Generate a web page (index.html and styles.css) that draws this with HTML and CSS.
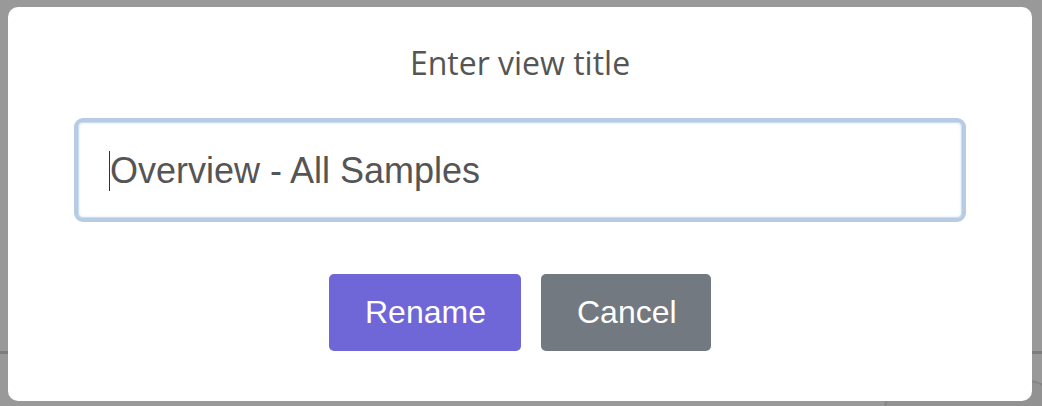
FILE: index.html
```html
<!DOCTYPE html>
<html>
<head>
<meta charset="utf-8">
<link rel="stylesheet" href="styles.css">
</head>
<body>
<div class="page">
  <div class="page-rule"></div>
  <div class="page-pill"></div>
</div>
<div class="overlay">
  <div class="dialog">
    <h2 class="dialog-title">Enter view title</h2>
    <div class="field"><span class="caret"></span>Overview - All Samples</div>
    <div class="actions">
      <button class="btn btn-primary">Rename</button>
      <button class="btn btn-secondary">Cancel</button>
    </div>
  </div>
</div>
</body>
</html>
```

FILE: styles.css
```css
html, body {
  margin: 0;
  padding: 0;
  width: 1042px;
  height: 406px;
  overflow: hidden;
  background: #999999;
}

.page {
  position: relative;
  width: 1042px;
  height: 406px;
  overflow: hidden;
}

.page-rule {
  position: absolute;
  left: 0;
  right: 0;
  top: 351px;
  height: 3px;
  background: #7d7d7d;
}

.page-pill {
  position: absolute;
  left: 884px;
  top: 380px;
  width: 170px;
  height: 60px;
  border-radius: 30px;
  background: #929292;
  border: 2px solid #858585;
}

.overlay {
  position: absolute;
  inset: 0;
  padding: 7px 10px 5px 8px;
  box-sizing: border-box;
}

.dialog {
  background: #ffffff;
  border-radius: 10px;
  height: 394px;
  box-sizing: border-box;
  padding: 34px 66px 0;
  display: flex;
  flex-direction: column;
  align-items: stretch;
}

.dialog-title {
  margin: 0;
  font-family: "Open Sans", sans-serif;
  font-weight: 400;
  font-size: 32px;
  line-height: 44px;
  color: #555555;
  text-align: center;
}

.field {
  margin-top: 33px;
  height: 104px;
  box-sizing: border-box;
  border: 4px solid #b7cbe4;
  border-radius: 9px;
  box-shadow: inset 0 0 0 1px #c9def1, inset 0 0 2px 2px #eef4fa;
  padding: 2px 0 0 32px;
  display: flex;
  align-items: center;
  font-family: "Liberation Sans", Arial, sans-serif;
  font-size: 36px;
  color: #555555;
}

.caret {
  display: inline-block;
  width: 1px;
  height: 40px;
  background: #333333;
  margin-left: -1px;
}

.actions {
  margin-top: 52px;
  display: flex;
  justify-content: center;
  gap: 20px;
}

.btn {
  height: 77px;
  border: none;
  border-radius: 5px;
  padding: 0 36px;
  font-family: "Liberation Sans", Arial, sans-serif;
  font-size: 32px;
  color: #ffffff;
}

.btn-primary {
  background: #6f66d8;
  width: 192px;
}

.btn-secondary {
  background: #727980;
  width: 170px;
}
```
